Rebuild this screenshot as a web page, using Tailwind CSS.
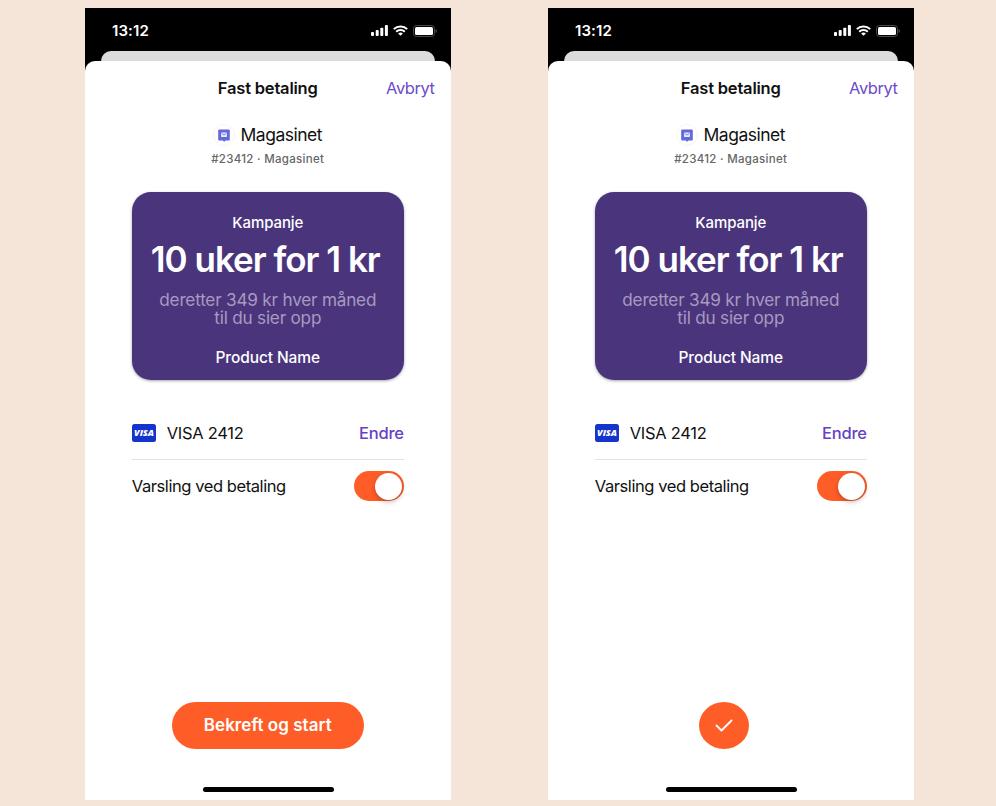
<!DOCTYPE html>
<html lang="no">
<head>
<meta charset="utf-8">
<title>Fast betaling</title>
<script src="https://cdn.jsdelivr.net/npm/@tailwindcss/browser@4"></script>
</head>
<body class="w-[996px] h-[806px] overflow-hidden bg-[#f5e5d9] font-['Inter','Liberation_Sans',sans-serif] text-[#111] whitespace-nowrap">
<main id="screens" class="flex gap-[97.5px] pl-[85px] pt-2"></main>

<template id="phone">
  <section class="w-[365.5px] h-[791.5px] bg-black flex flex-col overflow-hidden">
    <div class="h-[43px] shrink-0 flex items-center justify-between pl-[27px] pr-[14px] text-white">
      <span class="text-[15px] leading-[20px] pt-[2px] font-semibold tracking-[0.1px]">13:12</span>
      <span class="flex items-center pt-[2px]">
        <svg class="w-[17px] h-[11px]" viewBox="0 0 17 11" fill="#fff"><rect x="0" y="7" width="3" height="4" rx=".9"/><rect x="4.7" y="5" width="3" height="6" rx=".9"/><rect x="9.3" y="2.7" width="3" height="8.3" rx=".9"/><rect x="13.9" y="0" width="3" height="11" rx=".9"/></svg>
        <svg class="w-[15px] h-[11px] ml-[5px]" viewBox="0 0 15 11" fill="none" stroke="#fff" stroke-width="2"><path d="M.8 4.1a9.6 9.6 0 0 1 13.4 0"/><path d="M3.2 6.7a6.1 6.1 0 0 1 8.6 0"/><path d="M7.5 10.8 5.1 8.6a3.5 3.5 0 0 1 4.8 0z" fill="#fff" stroke="none"/></svg>
        <svg class="w-[24px] h-[12px] ml-[5px]" viewBox="0 0 24 12"><rect x=".5" y=".5" width="21" height="11" rx="3" fill="none" stroke="#4a4a4a"/><rect x="2" y="2" width="18" height="8" rx="1.5" fill="#fff"/><path d="M22.7 4v4q1.2-.6 1.2-2t-1.2-2z" fill="#555"/></svg>
      </span>
    </div>
    <div class="h-[10px] shrink-0 mx-[16px] rounded-t-[10px] bg-[#dcdcdc]"></div>
    <div class="flex-1 bg-white rounded-t-[10px] flex flex-col items-center">
      <header class="w-full h-[54px] shrink-0 grid grid-cols-[1fr_auto_1fr] items-center px-[16px]">
        <h1 class="col-start-2 text-[16.5px] font-semibold tracking-[-0.2px]">Fast betaling</h1>
        <a class="justify-self-end text-[16.5px] tracking-[-0.45px] text-[#6b4bcb]">Avbryt</a>
      </header>
      <div class="flex items-center h-[40px] pr-[1px]">
        <span class="size-[22px] rounded-full border border-[#f5f5f7] flex items-center justify-center mr-[6px]">
          <svg class="w-[12px] h-[13px]" viewBox="0 0 12 13"><path d="M1 .5h10q.8 0 .8.8v9.4q0 .8-.8.8H7.6L6.8 12.6H5.6L4.800 11.500H1q-.8 0-.8-.8V1.300Q.2.500 1 .500z" fill="#6468dd"/><rect x="3.100" y="3.500" width="5.800" height="4.600" rx=".6" fill="#e9eafb"/><path d="m3.800 4.500 2.200 1.500 2.200-1.500" stroke="#6468dd" stroke-width=".8" fill="none"/></svg>
        </span>
        <span class="text-[17.5px] tracking-[-0.5px]">Magasinet</span>
      </div>
      <p class="text-[11.5px] leading-[14px] font-medium text-[#666] tracking-[0.3px] -mt-[3px]">#23412 · Magasinet</p>
      <div class="w-[272px] h-[188px] shrink-0 mt-[25.500px] rounded-[19px] bg-[#4a357c] shadow-[0_1px_3px_rgba(0,0,0,0.35)] flex flex-col items-center text-white">
        <span class="text-[15px] leading-[20px] font-medium mt-[21.500px] tracking-[-0.1px]">Kampanje</span>
        <strong class="text-[35px] leading-[42px] font-semibold mt-[5px] pr-[5px] tracking-[-1px]">10 uker for 1 kr</strong>
        <span class="text-[17.200px] leading-[18px] text-center text-[#a79ac0] mt-[11px] tracking-[-0.22px]">deretter 349 kr hver måned<br>til du sier opp</span>
        <span class="text-[15.500px] leading-[20px] font-medium mt-[21px] tracking-[-0.1px]">Product Name</span>
      </div>
      <div class="w-[272px] h-[80px] shrink-0 border-b border-[#e2e2e2] flex items-center pt-[28px]">
        <svg class="w-[24px] h-[18px]" viewBox="0 0 24 18"><rect width="24" height="18" rx="2.500" fill="#1534cc"/><text x="12" y="12.400" text-anchor="middle" textLength="20" lengthAdjust="spacingAndGlyphs" font-family="Open Sans" font-weight="800" font-style="italic" font-size="9.500" fill="#fff">VISA</text></svg>
        <span class="ml-[11px] text-[16.500px] tracking-[-0.3px]">VISA 2412</span>
        <a class="ml-auto text-[16.500px] font-medium tracking-[-0.2px] text-[#6442c4]">Endre</a>
      </div>
      <div class="w-[272px] h-[53px] shrink-0 flex items-center justify-between">
        <span class="text-[16.500px] tracking-[-0.42px] pt-[1px]">Varsling ved betaling</span>
        <span class="w-[50px] h-[30px] rounded-full bg-[#ff5d28] p-[1.500px] flex justify-end"><i class="size-[27px] rounded-full bg-white shadow-[0_2px_5px_rgba(0,0,0,0.25)]"></i></span>
      </div>
      <div data-slot="action" class="w-[192px] mt-auto mb-[38px] h-[47px]"></div>
      <div class="w-[131px] h-[5px] rounded-full bg-black mb-[7.500px] ml-[1.500px]"></div>
    </div>
  </section>
</template>
<template id="confirm">
  <button class="block w-[192px] h-[47px] rounded-full bg-[#ff5d28] text-white text-[17px] font-semibold tracking-[0.05px] pt-[1px]">Bekreft og start</button>
</template>
<template id="done">
  <button class="w-[50px] h-[47px] ml-[64px] rounded-[50%] bg-[#ff5d28] flex items-center justify-center"><svg class="w-[18px] h-[13px]" viewBox="0 0 18 13" fill="none" stroke="#fff" stroke-width="1.900" stroke-linecap="round" stroke-linejoin="round"><path d="m1.500 6.500 5 5 10-10"/></svg></button>
</template>
<script>
  for (const id of ['confirm', 'done']) {
    const phone = document.getElementById('phone').content.cloneNode(true);
    phone.querySelector('[data-slot=action]').append(document.getElementById(id).content.cloneNode(true));
    document.getElementById('screens').append(phone);
  }
</script>
</body>
</html>
